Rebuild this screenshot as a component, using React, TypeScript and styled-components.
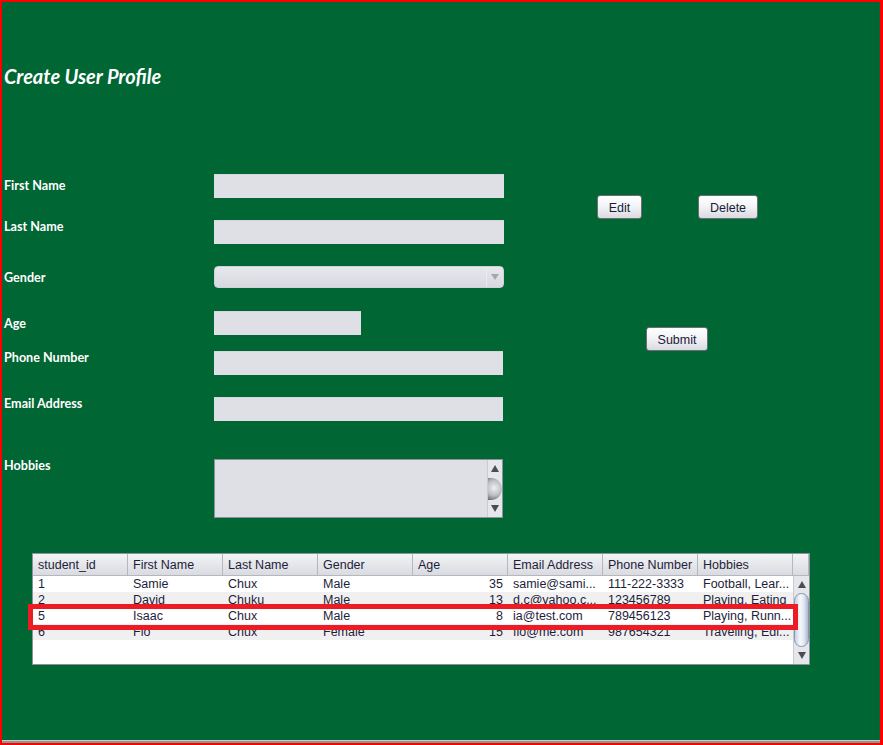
import React from "react";
import styled, { createGlobalStyle } from "styled-components";

const Global = createGlobalStyle`
  html, body { margin: 0; padding: 0; background: #ffffff; }
  * { box-sizing: border-box; }
`;

const Page = styled.div`
  width: 883px;
  height: 745px;
  border-style: solid;
  border-color: #ff0000;
  border-width: 2px 3px 2px 2px;
  background: #006633;
  display: flex;
  flex-direction: column;
  overflow: hidden;
`;

const Content = styled.div`
  position: relative;
  flex: 1;
  padding-left: 2px;
  &::after {
    content: "";
    position: absolute;
    top: 0;
    bottom: 0;
    right: 4px;
    width: 1px;
    background: #0d5a30;
  }
`;

const Title = styled.h1`
  margin: 63px 0 0 0;
  font-family: Lato, "Open Sans", sans-serif;
  font-weight: 700;
  font-style: italic;
  font-size: 20px;
  line-height: 22px;
  color: #ffffff;
`;

const Form = styled.div`
  display: flex;
  margin-top: 87px;
`;

const LabelColumn = styled.div`
  width: 210px;
  display: flex;
  flex-direction: column;
`;

const Label = styled.div<{ $mt: number }>`
  margin-top: ${(p) => p.$mt}px;
  font-family: Lato, "Open Sans", sans-serif;
  font-weight: 700;
  font-size: 12.6px;
  line-height: 16px;
  color: #ffffff;
  white-space: nowrap;
`;

const FieldColumn = styled.div`
  width: 290px;
  display: flex;
  flex-direction: column;
  align-items: flex-start;
`;

const TextField = styled.div<{ $mt: number; $w?: number }>`
  margin-top: ${(p) => p.$mt}px;
  width: ${(p) => p.$w ?? 290}px;
  height: 24px;
  background: #dee0e5;
  border-top: 1px solid #d4d6dc;
`;

const Combo = styled.div<{ $mt: number }>`
  margin-top: ${(p) => p.$mt}px;
  width: 290px;
  height: 22px;
  border-radius: 4px;
  background: linear-gradient(#e6e8ec, #d7d9df);
  border: 1px solid #cfd2d8;
  display: flex;
  justify-content: flex-end;
`;

const ComboArrow = styled.div`
  width: 17px;
  height: 100%;
  border-left: 1px solid #e9ebee;
  display: flex;
  align-items: center;
  justify-content: center;
  &::before {
    content: "";
    border-left: 4px solid transparent;
    border-right: 4px solid transparent;
    border-top: 6px solid #a3a7ae;
  }
`;

const TextArea = styled.div<{ $mt: number }>`
  margin-top: ${(p) => p.$mt}px;
  width: 289px;
  height: 59px;
  background: #dee0e5;
  border: 1px solid #8d9199;
  display: flex;
  justify-content: flex-end;
`;

const VScroll = styled.div<{ $w: number }>`
  width: ${(p) => p.$w}px;
  height: 100%;
  background: #e6e7eb;
  border-left: 1px solid #c9ccd2;
  display: flex;
  flex-direction: column;
  align-items: center;
  justify-content: space-between;
`;

const Arrow = styled.div<{ $up?: boolean }>`
  width: 0;
  height: 0;
  margin: 5px 0;
  border-left: 4px solid transparent;
  border-right: 4px solid transparent;
  ${(p) =>
    p.$up
      ? "border-bottom: 7px solid #4a4d55;"
      : "border-top: 7px solid #4a4d55;"}
`;

const HalfThumb = styled.div`
  align-self: stretch;
  height: 22px;
  border-radius: 0 11px 11px 0;
  background: radial-gradient(circle at 45% 45%, #f0f0f2 0%, #b9bbc0 55%, #55575c 100%);
`;

const CapsuleThumb = styled.div`
  align-self: stretch;
  height: 54px;
  border-radius: 9px;
  border: 1px solid #8496b0;
  background: linear-gradient(90deg, #c5d1e1 0%, #f6f9fc 40%, #dfe6ef 70%, #a9b9cf 100%);
`;

const ButtonPanel = styled.div`
  display: flex;
  flex-direction: column;
  align-items: flex-start;
`;

const ButtonRow = styled.div<{ $mt: number; $ml: number; $gap?: number }>`
  display: flex;
  margin-top: ${(p) => p.$mt}px;
  margin-left: ${(p) => p.$ml}px;
  gap: ${(p) => p.$gap ?? 0}px;
`;

const Button = styled.button<{ $w: number }>`
  width: ${(p) => p.$w}px;
  height: 24px;
  padding: 1px 0 0 0;
  border: 1px solid #6b6e75;
  border-radius: 3px;
  background: linear-gradient(#ffffff 0%, #f3f4f6 45%, #d9dbe0 100%);
  font-family: "Liberation Sans", Arial, sans-serif;
  font-size: 12.5px;
  color: #1c1a3a;
`;

const TableWrap = styled.div`
  position: relative;
  margin: 35px 0 0 28px;
  width: 778px;
  height: 112px;
  border: 1px solid #8d9199;
  background: #ffffff;
  display: flex;
  flex-direction: column;
  font-family: "Liberation Sans", Arial, sans-serif;
  font-size: 12.5px;
  color: #1e1e3a;
`;

const HeaderRow = styled.div`
  display: grid;
  grid-template-columns: repeat(8, 95px) 16px;
  height: 22px;
  border-bottom: 1px solid #b4b7be;
`;

const HeaderCell = styled.div`
  background: linear-gradient(#f4f4f7 0%, #e6e7eb 50%, #d9dbe0 100%);
  border-right: 1px solid #b4b7be;
  padding: 1px 0 0 5px;
  line-height: 20px;
  white-space: nowrap;
  overflow: hidden;
`;

const Body = styled.div`
  flex: 1;
  display: flex;
`;

const Rows = styled.div`
  width: 760px;
  display: flex;
  flex-direction: column;
`;

const Row = styled.div<{ $alt: boolean }>`
  display: grid;
  grid-template-columns: repeat(8, 95px);
  height: 16px;
  background: ${(p) => (p.$alt ? "#f0f0f1" : "#ffffff")};
`;

const Cell = styled.div<{ $right?: boolean }>`
  padding: 1px 5px 0 5px;
  height: 16px;
  line-height: 15px;
  white-space: nowrap;
  overflow: hidden;
  text-align: ${(p) => (p.$right ? "right" : "left")};
`;

const Highlight = styled.div`
  position: absolute;
  left: -5px;
  top: 50px;
  width: 770px;
  height: 26px;
  border: 5px solid #ed1c24;
`;

const Footer = styled.div`
  height: 3px;
  background: #8f9497;
  border-top: 1px solid #c5c9cb;
`;

const headers = [
  "student_id",
  "First Name",
  "Last Name",
  "Gender",
  "Age",
  "Email Address",
  "Phone Number",
  "Hobbies",
];

const rows = [
  ["1", "Samie", "Chux", "Male", "35", "samie@sami...", "111-222-3333", "Football, Lear..."],
  ["2", "David", "Chuku", "Male", "13", "d.c@yahoo.c...", "123456789", "Playing, Eating"],
  ["5", "Isaac", "Chux", "Male", "8", "ia@test.com", "789456123", "Playing, Runn..."],
  ["6", "Flo", "Chux", "Female", "15", "flo@me.com", "987654321", "Traveling, Edi..."],
];

export default function App() {
  return (
    <>
      <Global />
      <Page>
        <Content>
          <Title>Create User Profile</Title>
          <Form>
            <LabelColumn>
              <Label $mt={4}>First Name</Label>
              <Label $mt={25}>Last Name</Label>
              <Label $mt={35}>Gender</Label>
              <Label $mt={30}>Age</Label>
              <Label $mt={18}>Phone Number</Label>
              <Label $mt={30}>Email Address</Label>
              <Label $mt={46}>Hobbies</Label>
            </LabelColumn>
            <FieldColumn>
              <TextField $mt={0} />
              <TextField $mt={22} />
              <Combo $mt={22}>
                <ComboArrow />
              </Combo>
              <TextField $mt={23} $w={147} />
              <TextField $mt={16} $w={289} />
              <TextField $mt={22} $w={289} />
              <TextArea $mt={38}>
                <VScroll $w={15}>
                  <Arrow $up />
                  <HalfThumb />
                  <Arrow />
                </VScroll>
              </TextArea>
            </FieldColumn>
            <ButtonPanel>
              <ButtonRow $mt={21} $ml={93} $gap={56}>
                <Button $w={45}>Edit</Button>
                <Button $w={60}>Delete</Button>
              </ButtonRow>
              <ButtonRow $mt={108} $ml={142}>
                <Button $w={62}>Submit</Button>
              </ButtonRow>
            </ButtonPanel>
          </Form>
          <TableWrap>
            <HeaderRow>
              {headers.map((h) => (
                <HeaderCell key={h}>{h}</HeaderCell>
              ))}
              <HeaderCell />
            </HeaderRow>
            <Body>
              <Rows>
                {rows.map((r, i) => (
                  <Row key={r[0]} $alt={i % 2 === 1}>
                    {r.map((c, j) => (
                      <Cell key={j} $right={j === 4}>
                        {c}
                      </Cell>
                    ))}
                  </Row>
                ))}
              </Rows>
              <VScroll $w={16}>
                <Arrow $up />
                <CapsuleThumb />
                <Arrow />
              </VScroll>
            </Body>
            <Highlight />
          </TableWrap>
        </Content>
        <Footer />
      </Page>
    </>
  );
}
